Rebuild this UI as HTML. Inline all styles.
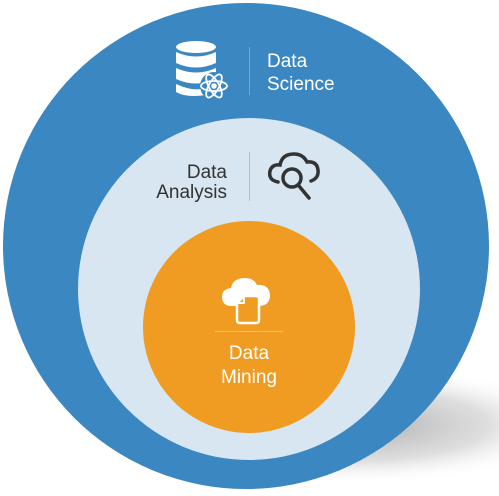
<!DOCTYPE html>
<html><head><style>
html,body{margin:0;padding:0;background:#fff;}
body{width:499px;height:496px;overflow:hidden;position:relative;font-family:"Liberation Sans",Arial,sans-serif;}
</style></head><body>
<svg width="499" height="496" viewBox="0 0 499 496" style="position:absolute;left:0;top:0">
<defs>
<radialGradient id="sh" cx="0.5" cy="0.5" r="0.5">
<stop offset="0" stop-color="#9a9a9a" stop-opacity="0.85"/>
<stop offset="0.6" stop-color="#bdbdbd" stop-opacity="0.5"/>
<stop offset="1" stop-color="#fff" stop-opacity="0"/>
</radialGradient>
</defs>
<ellipse cx="350" cy="425" rx="230" ry="60" fill="url(#sh)"/>
<circle cx="246" cy="246" r="243" fill="#3a87c2"/>
<circle cx="249" cy="289" r="171" fill="#d7e6f1"/>
<circle cx="249" cy="327" r="106" fill="#f09c22"/>
<g fill="#fff">
<ellipse cx="196" cy="47" rx="20" ry="6"/>
<path d="M176 52 q20 9 40 0 v11 q-20 9 -40 0z"/>
<path d="M176 68 q20 9 40 0 v11 q-20 9 -40 0z"/>
<path d="M176 84 q20 9 30 3 v8 q-20 3 -30 -3z"/>
</g>
<circle cx="214" cy="86" r="14" fill="#3a87c2"/>
<g fill="none" stroke="#fff" stroke-width="1.8">
<ellipse cx="214" cy="86" rx="13" ry="5"/>
<ellipse cx="214" cy="86" rx="13" ry="5" transform="rotate(60 214 86)"/>
<ellipse cx="214" cy="86" rx="13" ry="5" transform="rotate(-60 214 86)"/>
</g>
<circle cx="214" cy="86" r="2.8" fill="#fff"/>
<line x1="249.5" y1="47" x2="249.5" y2="95" stroke="#6fa8d4" stroke-width="1"/>
<text x="267" y="67" font-size="19" fill="#fff">Data</text>
<text x="267" y="90" font-size="19" fill="#fff">Science</text>
<text x="227" y="178" font-size="19" fill="#333" text-anchor="end">Data</text>
<text x="227" y="198" font-size="19" fill="#333" text-anchor="end">Analysis</text>
<line x1="249.5" y1="152" x2="249.5" y2="201" stroke="#a9c3d8" stroke-width="1"/>
<g fill="none" stroke="#333" stroke-width="3.5" stroke-linecap="round">
<path d="M278 182 q-10 -2 -8 -11 q2 -7 10 -6 q2 -11 14 -11 q9 0 13 8 q10 -1 11 8 q1 8 -7 11"/>
<circle cx="292" cy="178" r="9"/>
<line x1="299" y1="186" x2="309" y2="198"/>
</g>
<path d="M232 306 q-10 0 -10 -9 q0 -8 9 -9 q2 -10 14 -10 q9 0 12 7 q12 -1 13 10 q0 10 -10 11z" fill="#fff"/>
<path d="M244 296 h12 q3 0 3 3 v21 q0 3 -3 3 h-16 q-3 0 -3 -3 v-17z" fill="#f09c22" stroke="#fff" stroke-width="2.5" stroke-linejoin="round"/>
<path d="M244 296 v7 h-7" fill="none" stroke="#fff" stroke-width="2" stroke-linejoin="round"/>
<line x1="215" y1="331.5" x2="283" y2="331.5" stroke="#f6c27a" stroke-width="1"/>
<text x="249" y="359" font-size="19" fill="#fff" text-anchor="middle">Data</text>
<text x="249" y="383" font-size="19" fill="#fff" text-anchor="middle">Mining</text>
</svg>
</body></html>
